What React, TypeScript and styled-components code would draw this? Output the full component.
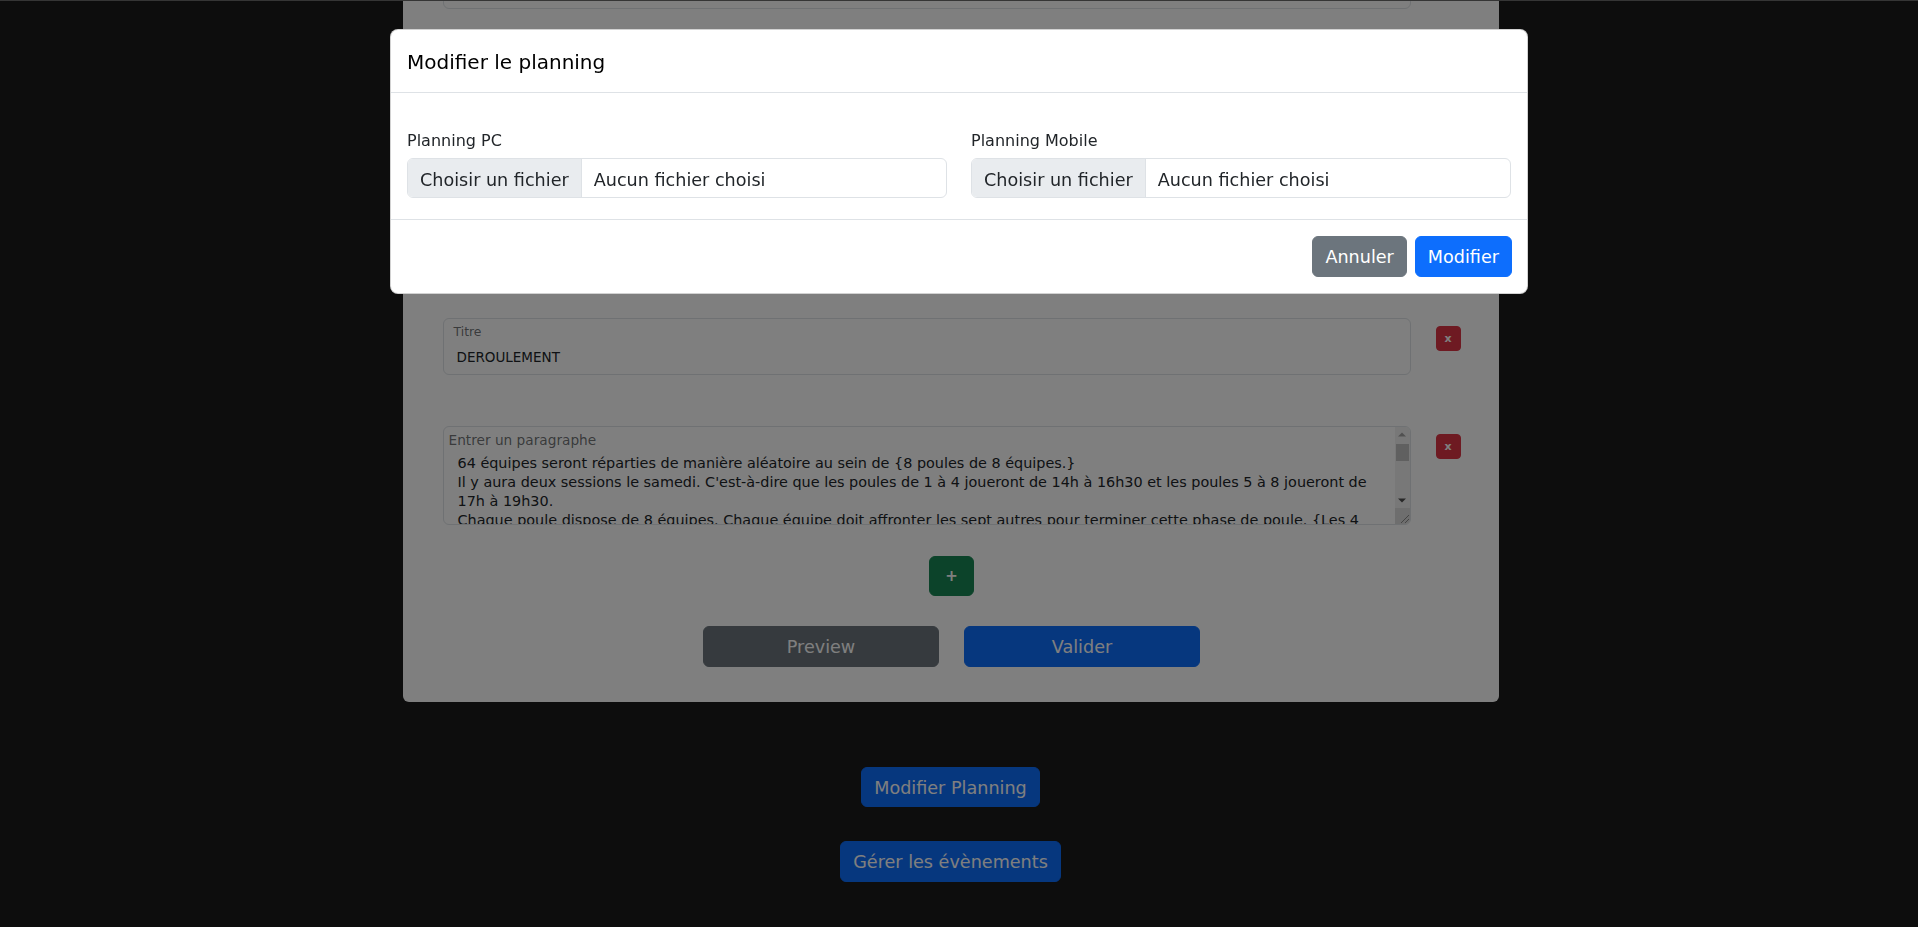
import React from "react";
import styled, { createGlobalStyle } from "styled-components";

const FONT = `"DejaVu Sans", "Noto Sans", sans-serif`;

const GlobalStyle = createGlobalStyle`
  *, *::before, *::after { box-sizing: border-box; }
  html, body { margin: 0; height: 100%; }
  body {
    padding-right: 17px;
    background: #1a1a1a;
    font-family: ${FONT};
    color: #212529;
    overflow: hidden;
  }
`;

const TopEdge = styled.div`
  position: fixed;
  top: 0;
  left: 0;
  right: 0;
  height: 1px;
  background: #353535;
  z-index: 2000;
`;

const Main = styled.main`
  margin-top: -78px;
  display: flex;
  flex-direction: column;
  align-items: center;
`;

const Card = styled.section`
  width: 1096px;
  background: #ffffff;
  border-radius: 6px;
  padding: 30px 38px 35px 40px;
  display: flex;
  flex-direction: column;
`;

const Blocks = styled.div`
  display: flex;
  flex-direction: column;
  gap: 51px;
`;

const BlockRow = styled.div`
  display: flex;
  align-items: flex-start;
  gap: 25px;
`;

const FloatField = styled.div`
  position: relative;
  flex: 1;
`;

const FloatLabel = styled.label<{ $size: number; $pad: string }>`
  position: absolute;
  top: 0;
  left: 0;
  padding: ${(p) => p.$pad};
  font-size: ${(p) => p.$size}px;
  line-height: 18px;
  color: rgba(33, 37, 41, 0.65);
  pointer-events: none;
`;

const TitleInput = styled.input`
  display: block;
  width: 100%;
  height: 57px;
  padding: 26px 12px 6px 13px;
  border: 1px solid #dee2e6;
  border-radius: 6px;
  font-family: ${FONT};
  font-size: 13.5px;
  color: #212529;
  background: #fff;
  outline: none;
`;

const ParagraphArea = styled.textarea`
  display: block;
  width: 100%;
  height: 99px;
  padding: 27px 19px 4px 14px;
  border: 1px solid #dee2e6;
  border-radius: 6px;
  font-family: ${FONT};
  font-size: 14.4px;
  line-height: 19px;
  color: #212529;
  background: #fff;
  resize: none;
  outline: none;
  overflow: hidden;
  scrollbar-width: none;
  &::-webkit-scrollbar { display: none; }
`;

/* drawn scrollbar lying over the textarea's right edge */
const ScrollTrack = styled.div`
  position: absolute;
  top: 1px;
  right: 1px;
  bottom: 1px;
  width: 15px;
  display: flex;
  flex-direction: column;
  background: #f1f1f1;
  border-top-right-radius: 5px;
  border-bottom-right-radius: 5px;
  overflow: hidden;
`;

const ScrollArrow = styled.div`
  height: 15px;
  flex-shrink: 0;
  display: flex;
  align-items: center;
  justify-content: center;
`;

const ScrollThumb = styled.div`
  height: 17px;
  margin: 2px 1px 0;
  flex-shrink: 0;
  background: #c1c1c1;
`;

const ScrollSpacer = styled.div`
  flex: 1;
`;

const ScrollCorner = styled.div`
  height: 16px;
  flex-shrink: 0;
  background: #dcdcdc;
  display: flex;
  align-items: flex-end;
  justify-content: flex-end;
`;

const RemoveButton = styled.button`
  flex-shrink: 0;
  width: 25px;
  height: 25px;
  margin-top: 8px;
  padding: 0;
  border: 1px solid #dc3545;
  border-radius: 4px;
  background: #dc3545;
  color: #fff;
  font-family: ${FONT};
  font-weight: bold;
  font-size: 11px;
  line-height: 1;
`;

const Btn = styled.button<{ $variant: "primary" | "secondary" | "success" }>`
  font-family: ${FONT};
  font-size: 17.6px;
  line-height: 26.4px;
  padding: 7px 12px 5px;
  border-radius: 6px;
  color: #fff;
  cursor: pointer;
  background: ${(p) =>
    p.$variant === "primary" ? "#0d6efd" : p.$variant === "secondary" ? "#6c757d" : "#198754"};
  border: 1px solid
    ${(p) =>
      p.$variant === "primary" ? "#0d6efd" : p.$variant === "secondary" ? "#6c757d" : "#198754"};
`;

const AddRow = styled.div`
  display: flex;
  justify-content: center;
  margin-top: 31px;
`;

const AddButton = styled(Btn)`
  padding: 6px 15px;
  font-size: 15px;
  font-weight: bold;
`;

const ActionRow = styled.div`
  display: flex;
  justify-content: center;
  gap: 25px;
  margin-top: 30px;
`;

const WideBtn = styled(Btn)`
  width: 236px;
`;

const PageActions = styled.div`
  display: flex;
  flex-direction: column;
  align-items: center;
  gap: 34px;
  margin-top: 65px;
`;

/* ---------- modal ---------- */

const Backdrop = styled.div`
  position: fixed;
  inset: 0;
  background: rgba(0, 0, 0, 0.5);
  z-index: 1050;
`;

const ModalLayer = styled.div`
  position: fixed;
  inset: 0;
  z-index: 1055;
  overflow: hidden;
`;

const Dialog = styled.div`
  width: 1138px;
  margin: 29px auto 0;
  background: #fff;
  border: 1px solid rgba(0, 0, 0, 0.175);
  border-radius: 8px;
  display: flex;
  flex-direction: column;
`;

const ModalHeader = styled.div`
  padding: 16px;
  border-bottom: 1px solid #dee2e6;
`;

const ModalTitle = styled.h5`
  margin: 0;
  font-size: 20px;
  line-height: 30px;
  font-weight: 500;
  color: #000;
  padding-top: 1px;
  margin-bottom: -1px;
`;

const ModalBody = styled.div`
  padding: 33px 16px 21px;
  display: grid;
  grid-template-columns: 1fr 1fr;
  gap: 24px;
`;

const Field = styled.div`
  display: flex;
  flex-direction: column;
`;

const FieldLabel = styled.label`
  font-size: 16px;
  line-height: 24px;
  padding-top: 3px;
  margin-bottom: 5px;
  color: #212529;
`;

const FileBox = styled.div`
  display: flex;
  border: 1px solid #dee2e6;
  border-radius: 6px;
  overflow: hidden;
  font-size: 17.6px;
  line-height: 26.4px;
  color: #212529;
  background: #fff;
`;

const FilePick = styled.span`
  padding: 8px 12px 4px;
  background: #e9ecef;
  border-right: 1px solid #dee2e6;
`;

const FileName = styled.span`
  padding: 8px 12px 4px;
`;

const ModalFooter = styled.div`
  display: flex;
  justify-content: flex-end;
  gap: 8px;
  padding: 16px 15px 16px 16px;
  border-top: 1px solid #dee2e6;
`;

const PARAGRAPH =
  "64 équipes seront réparties de manière aléatoire au sein de {8 poules de 8 équipes.}\n" +
  "Il y aura deux sessions le samedi. C'est-à-dire que les poules de 1 à 4 joueront de 14h à 16h30 et les poules 5 à 8 joueront de 17h à 19h30.\n" +
  "Chaque poule dispose de 8 équipes. Chaque équipe doit affronter les sept autres pour terminer cette phase de poule. {Les 4 premières équipes de chaque poule seront qualifiées pour la phase finale.}\n" +
  "La phase finale se déroulera le dimanche à partir de 10h.";

type Block = { kind: "title" | "paragraph"; value: string };

const BLOCKS: Block[] = [
  { kind: "title", value: "PRESENTATION" },
  { kind: "paragraph", value: "Le tournoi réunira 64 équipes venues de toute la région." },
  { kind: "title", value: "INSCRIPTIONS" },
  { kind: "title", value: "DEROULEMENT" },
  { kind: "paragraph", value: PARAGRAPH },
];

function Scrollbar() {
  return (
    <ScrollTrack>
      <ScrollArrow>
        <svg width="8" height="5" viewBox="0 0 8 5">
          <path d="M0 4.5 L4 0.5 L8 4.5 Z" fill="#a3a3a3" />
        </svg>
      </ScrollArrow>
      <ScrollThumb />
      <ScrollSpacer />
      <ScrollArrow>
        <svg width="8" height="5" viewBox="0 0 8 5">
          <path d="M0 0.5 L4 4.5 L8 0.5 Z" fill="#505050" />
        </svg>
      </ScrollArrow>
      <ScrollCorner>
        <svg width="14" height="14" viewBox="0 0 14 14">
          <path d="M13 5 L5 13 M13 9 L9 13" stroke="#8a8a8a" strokeWidth="1" />
        </svg>
      </ScrollCorner>
    </ScrollTrack>
  );
}

function EditorBlock({ block }: { block: Block }) {
  return (
    <BlockRow>
      <FloatField>
        {block.kind === "title" ? (
          <>
            <TitleInput defaultValue={block.value} />
            <FloatLabel $size={12.4} $pad="5px 11px">
              Titre
            </FloatLabel>
          </>
        ) : (
          <>
            <ParagraphArea defaultValue={block.value} />
            <FloatLabel $size={13.7} $pad="5px 6px">
              Entrer un paragraphe
            </FloatLabel>
            <Scrollbar />
          </>
        )}
      </FloatField>
      <RemoveButton>x</RemoveButton>
    </BlockRow>
  );
}

function FileInput({ label }: { label: string }) {
  return (
    <Field>
      <FieldLabel>{label}</FieldLabel>
      <FileBox>
        <FilePick>Choisir un fichier</FilePick>
        <FileName>Aucun fichier choisi</FileName>
      </FileBox>
    </Field>
  );
}

export default function App() {
  return (
    <>
      <GlobalStyle />
      <Main>
        <Card>
          <Blocks>
            {BLOCKS.map((b, i) => (
              <EditorBlock key={i} block={b} />
            ))}
          </Blocks>
          <AddRow>
            <AddButton $variant="success">+</AddButton>
          </AddRow>
          <ActionRow>
            <WideBtn $variant="secondary">Preview</WideBtn>
            <WideBtn $variant="primary">Valider</WideBtn>
          </ActionRow>
        </Card>
        <PageActions>
          <Btn $variant="primary">Modifier Planning</Btn>
          <Btn $variant="primary">Gérer les évènements</Btn>
        </PageActions>
      </Main>

      <Backdrop />
      <ModalLayer>
        <Dialog>
          <ModalHeader>
            <ModalTitle>Modifier le planning</ModalTitle>
          </ModalHeader>
          <ModalBody>
            <FileInput label="Planning PC" />
            <FileInput label="Planning Mobile" />
          </ModalBody>
          <ModalFooter>
            <Btn $variant="secondary">Annuler</Btn>
            <Btn $variant="primary">Modifier</Btn>
          </ModalFooter>
        </Dialog>
      </ModalLayer>
      <TopEdge />
    </>
  );
}
